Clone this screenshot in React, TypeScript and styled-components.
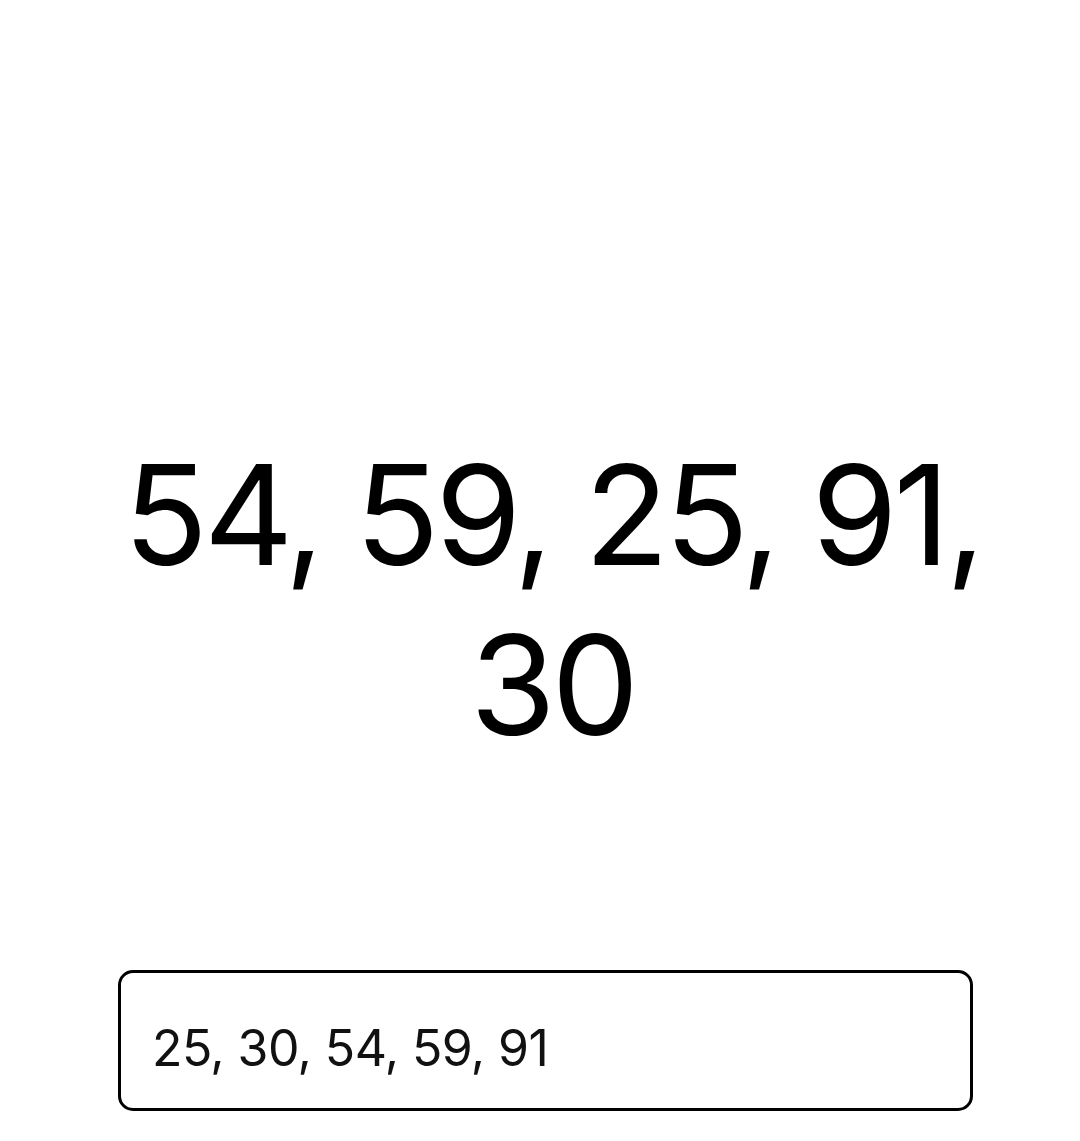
import React from "react";
import styled, { createGlobalStyle } from "styled-components";

const Global = createGlobalStyle`
  html, body { margin: 0; padding: 0; background: #ffffff; }
  body { font-family: Inter, "Liberation Sans", Arial, sans-serif; }
`;

const Page = styled.main`
  width: 1080px;
  min-height: 1141px;
  box-sizing: border-box;
  padding: 430px 107px 0 118px;
  display: flex;
  flex-direction: column;
  align-items: stretch;
`;

const Numbers = styled.h1`
  margin: 0 -30px 0 -16px;
  font-family: Inter, "Liberation Sans", Arial, sans-serif;
  font-weight: 400;
  font-size: 139px;
  line-height: 170px;
  letter-spacing: -4.3px;
  color: #000;
  text-align: center;
`;

const SortedField = styled.input`
  margin-top: 200px;
  box-sizing: border-box;
  width: 855px;
  height: 141px;
  border: 3px solid #000;
  border-radius: 15px;
  padding: 14px 20px 0 31px;
  font-family: Inter, "Liberation Sans", Arial, sans-serif;
  font-size: 50px;
  letter-spacing: -0.6px;
  color: #111;
  background: #fff;
  outline: none;
`;

export default function App() {
  const values = [54, 59, 25, 91, 30];
  const sorted = [...values].sort((a, b) => a - b);
  return (
    <>
      <Global />
      <Page>
        <Numbers>{values.join(", ")}</Numbers>
        <SortedField readOnly value={sorted.join(", ")} />
      </Page>
    </>
  );
}
